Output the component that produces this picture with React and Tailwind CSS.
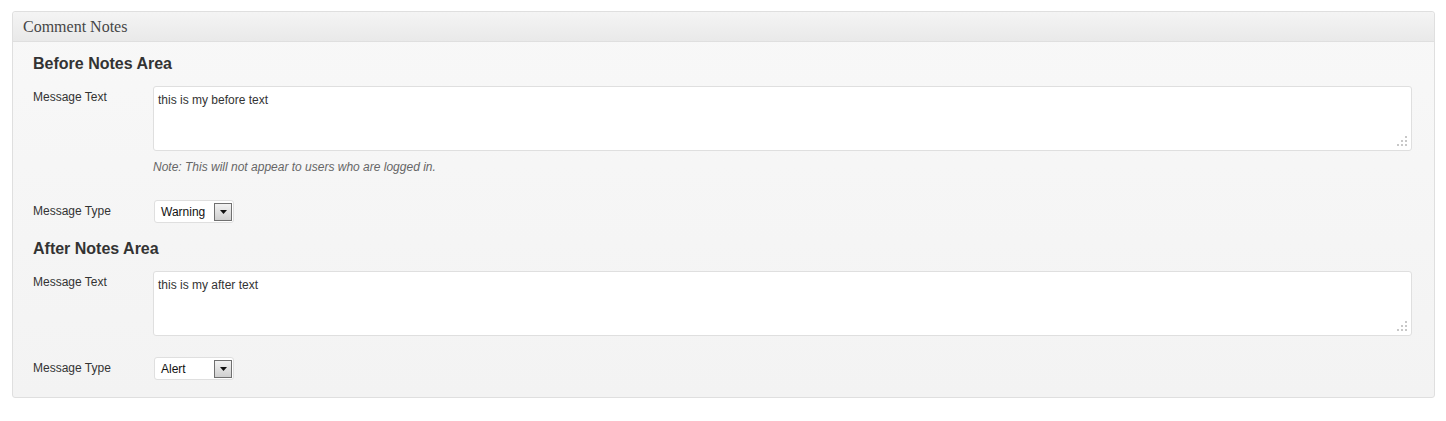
import React from "react";

function Grip() {
  return (
    <svg width="11" height="11" viewBox="0 0 11 11" className="absolute right-[3px] bottom-[3px]">
      <rect x="8" y="0" width="2" height="2" fill="#c8c8c8" />
      <rect x="4" y="4" width="2" height="2" fill="#c8c8c8" />
      <rect x="8" y="4" width="2" height="2" fill="#c8c8c8" />
      <rect x="0" y="8" width="2" height="2" fill="#c8c8c8" />
      <rect x="4" y="8" width="2" height="2" fill="#c8c8c8" />
      <rect x="8" y="8" width="2" height="2" fill="#c8c8c8" />
    </svg>
  );
}

function Select({ value }) {
  return (
    <div className="ml-[1px] w-[80px] h-[23px] bg-white border border-[#dfdfdf] rounded-[3px] flex items-center justify-between pl-[6px] pr-[1px]">
      <span className="text-[12px] leading-[16px] text-[#111]">{value}</span>
      <div className="w-[18px] h-[18px] border border-[#707070] bg-gradient-to-b from-[#f2f2f2] to-[#cfcfcf] flex items-center justify-center">
        <svg width="7" height="4" viewBox="0 0 7 4">
          <path d="M0 0 H7 L3.5 4 Z" fill="#111" />
        </svg>
      </div>
    </div>
  );
}

function TextArea({ text }) {
  return (
    <div className="relative w-[1259px] h-[65px] bg-white border border-[#dfdfdf] rounded-[3px] px-[4px] pt-[5px] text-[12px] leading-[16px] text-[#333]">
      <span>{text}</span>
      <Grip />
    </div>
  );
}

function Section({ title, text, note, type }) {
  return (
    <div>
      <h3 className="text-[16px] leading-[19px] font-bold text-[#333]">{title}</h3>
      <div className="mt-[13px] flex">
        <div className="w-[120px] pt-[3px] text-[12px] leading-[16px] text-[#333]">Message Text</div>
        <div>
          <TextArea text={text} />
          {note && (
            <div className="mt-[8px] text-[12px] leading-[16px] italic text-[#666]">{note}</div>
          )}
        </div>
      </div>
      <div className={`${note ? "mt-[25px]" : "mt-[21px]"} flex items-center`}>
        <div className="w-[120px] text-[12px] leading-[16px] text-[#333] -mt-[2px]">Message Type</div>
        <Select value={type} />
      </div>
    </div>
  );
}

export default function App() {
  return (
    <div className="w-[1446px] h-[421px] bg-white pt-[11px] pl-[12px]" style={{ fontFamily: '"Liberation Sans", Arial, sans-serif' }}>
      <div className="w-[1423px] border border-[#dfdfdf] rounded-[3px] bg-gradient-to-b from-[#f8f8f8] to-[#f3f3f3]">
        <div className="h-[30px] border-b border-[#dfdfdf] bg-gradient-to-b from-[#f4f4f4] to-[#e9e9e9] flex items-center px-[10px] rounded-t-[3px]">
          <span className="text-[16px] text-[#464646]" style={{ fontFamily: '"Liberation Serif", Georgia, serif' }}>Comment Notes</span>
        </div>
        <div className="px-[20px] pt-[12px] pb-[17px] flex flex-col gap-[16px]">
          <Section
            title="Before Notes Area"
            text="this is my before text"
            note="Note: This will not appear to users who are logged in."
            type="Warning"
          />
          <Section title="After Notes Area" text="this is my after text" type="Alert" />
        </div>
      </div>
    </div>
  );
}
